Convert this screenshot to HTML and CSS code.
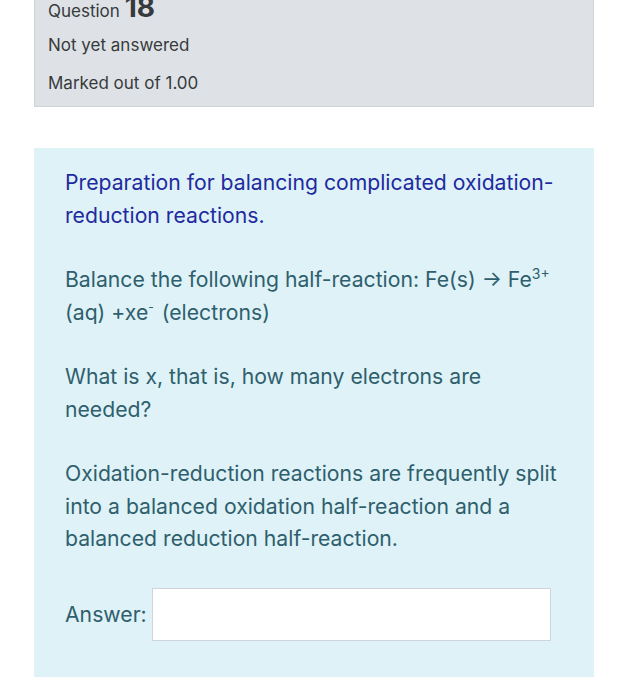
FILE: index.html
```html
<!doctype html>
<html lang="en">
<head>
<meta charset="UTF-8">
<title>Question 18</title>
<link rel="stylesheet" href="styles.css">
</head>
<body>
<div class="que">
	<div class="info">
		<h3 class="no">Question <span class="qno">18</span></h3>
		<div class="state">Not yet answered</div>
		<div class="grade">Marked out of 1.00</div>
	</div>
	<div class="formulation">
		<div class="qtext">
			<p class="intro">Preparation for balancing complicated oxidation-reduction reactions.</p>
			<p>Balance the following half-reaction: Fe(s) &rarr; Fe<sup>3+</sup> (aq) +xe<sup class="minus">-</sup> (electrons)</p>
			<p>What is x, that is, how many electrons are needed?</p>
			<p>Oxidation-reduction reactions are frequently split into a balanced oxidation half-reaction and a balanced reduction half-reaction.</p>
		</div>
		<div class="ablock">
			<label for="answer">Answer:</label>
			<input type="text" id="answer" class="answer">
		</div>
	</div>
</div>
</body>
</html>
```
FILE: styles.css
```css
*{ margin:0; padding:0; box-sizing:border-box;}
body{
	background:#fff;
	font-family:Inter, "Noto Sans", sans-serif;
	color:#373a3c;
}
.que{
	width:560px;
	margin:0 0 0 34px;
}
.info{
	margin-top:-9px;
	padding:0 13px 4px;
	background-color:#dee2e6;
	border:1px solid #cfd4d9;
	font-size:17px;
}
.info .no{
	font-weight:normal;
	font-size:17px;
	line-height:30px;
	color:#373a3c;
}
.info .qno{
	font-weight:bold;
	font-size:28px;
}
.info .state, .info .grade{
	line-height:38px;
}
.formulation{
	margin-top:41px;
	padding:18px 31px 36px;
	background-color:#def2f8;
	color:#2f5f6c;
	font-size:21.2px;
}
.qtext p{
	line-height:32.5px;
	margin-bottom:32px;
}
.qtext p:last-child{
	margin-bottom:0;
}
.qtext .intro{
	color:#1f2a9f;
}
sup{
	font-size:14px;
	line-height:0;
}
sup.minus{
	font-size:12px;
	margin-right:2px;
}
.ablock{
	display:flex;
	align-items:center;
	gap:5px;
	margin-top:33px;
}
.answer{
	width:399px;
	height:53px;
	border:1px solid #ced4da;
	background:#fff;
	font-size:20px;
}
```
